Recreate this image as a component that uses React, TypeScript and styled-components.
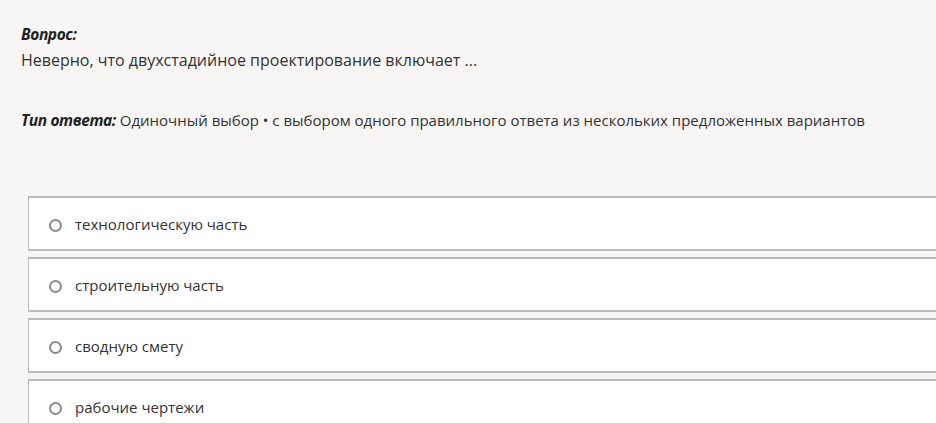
import React from 'react'
import styled, { createGlobalStyle } from 'styled-components'

const answers = [
  'технологическую часть',
  'строительную часть',
  'сводную смету',
  'рабочие чертежи',
]

const GlobalStyle = createGlobalStyle`
  html, body {
    margin: 0;
    padding: 0;
    background: #f7f6f5;
  }
  body {
    font-family: 'Open Sans', 'Noto Sans', sans-serif;
    color: #333;
  }
`

const App: React.FC = () => {
  const [selected, setSelected] = React.useState<number | null>(null)

  return (
    <Root>
      <GlobalStyle />
      <Question>
        <Label>Вопрос:</Label>
        <QuestionText>Неверно, что двухстадийное проектирование включает ...</QuestionText>
      </Question>
      <AnswerType>
        <Label>Тип ответа:</Label> Одиночный выбор • с выбором одного правильного ответа из нескольких
        предложенных вариантов
      </AnswerType>
      <Options>
        {answers.map((text, i) => (
          <Option key={text} onClick={() => setSelected(i)}>
            <Radio checked={selected === i} />
            <span>{text}</span>
          </Option>
        ))}
      </Options>
    </Root>
  )
}

export default App

const Root = styled.div`
  padding: 23px 0 0 21px;
  height: 400px;
  overflow: hidden;
`

const Question = styled.div`
  display: flex;
  flex-direction: column;
`

const Label = styled.span`
  font-weight: 700;
  font-style: italic;
  color: #222;
  font-size: 15.5px;
  letter-spacing: -0.4px;
`

const QuestionText = styled.div`
  font-size: 16px;
  line-height: 24px;
  margin-top: 3px;
`

const AnswerType = styled.div`
  margin-top: 37px;
  font-size: 15px;
  line-height: 22px;
  white-space: nowrap;
`

const Options = styled.div`
  display: flex;
  flex-direction: column;
  gap: 6px;
  margin: 65px -10px 0 7px;
`

const Option = styled.div`
  display: flex;
  align-items: center;
  gap: 13px;
  height: 51px;
  flex-shrink: 0;
  padding-left: 20px;
  background: #fff;
  border: 2px solid #bababa;
  border-left-width: 1.5px;
  font-size: 15px;
  color: #333;
  cursor: pointer;
`

const Radio = styled.span<{ checked: boolean }>`
  display: block;
  flex-shrink: 0;
  width: 13px;
  height: 13px;
  margin-top: 3px;
  box-sizing: border-box;
  border-radius: 50%;
  border: 2px solid #8a8a8a;
  background: ${p => (p.checked ? 'radial-gradient(#555 0 3px, #fff 3.5px)' : '#fff')};
`
